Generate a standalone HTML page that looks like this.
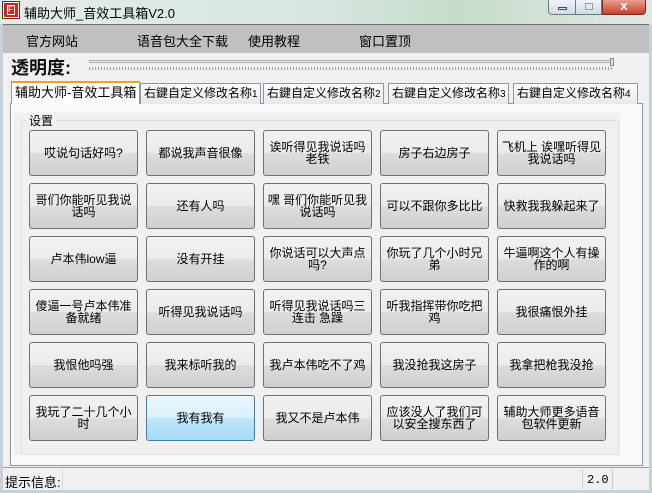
<!DOCTYPE html>
<html><head><meta charset="utf-8"><style>
*{margin:0;padding:0;box-sizing:border-box}
body{width:652px;height:493px;overflow:hidden;background:#f0f0f0;font-family:"Liberation Sans","Noto Sans CJK SC","WenQuanYi Zen Hei",sans-serif;font-size:12px;color:#000;position:relative}
.abs{position:absolute}
#title{left:0;top:0;width:652px;height:24px;background:linear-gradient(90deg,#e4ece8 0%,#d6e6de 50%,#c6dccc 70%,#dfe8e2 100%)}
.btn{position:absolute;width:109px;height:46px;border:1px solid #707070;border-radius:3px;background:linear-gradient(#f2f2f2 0%,#ebebeb 50%,#dddddd 51%,#cfcfcf 100%);display:flex;align-items:center;justify-content:center;text-align:center;line-height:12px;font-size:12px;padding:0 3px}
.btn.sel{border-color:#3c7fb1;background:linear-gradient(#eaf6fd 0%,#d9f0fc 50%,#bee6fd 51%,#a7d9f5 100%)}
.tab{position:absolute;top:83px;height:21px;border:1px solid #8c9aa8;border-bottom:none;background:linear-gradient(#fdfdfd,#e8e8e8);font-size:12px;line-height:19px;padding-left:3px;white-space:nowrap;overflow:hidden}
</style></head><body>
<div id="title" class="abs"></div>
<div class="abs" style="left:3px;top:2px;width:16px;height:16px;background:#c42a20;border:1px solid #fff;outline:1px solid #8a1a14"><div style="position:absolute;left:3px;top:2px;width:8px;height:10px;border:1px solid #fff;color:#fff;font-size:8px;line-height:8px">F</div></div>
<div class="abs" style="left:24px;top:3px;font-size:13px;">辅助大师_音效工具箱V2.0</div>
<div class="abs" style="left:548px;top:0;width:28px;height:15px;border:1px solid #6a7a8a;border-top:none;border-radius:0 0 0 4px;background:linear-gradient(#f0f4f8,#d0dae4)"><div style="position:absolute;left:9px;top:7px;width:9px;height:3px;border:1px solid #445"></div></div>
<div class="abs" style="left:575px;top:0;width:27px;height:15px;border:1px solid #6a7a8a;border-top:none;background:linear-gradient(#f0f4f8,#d0dae4)"><div style="position:absolute;left:9px;top:3px;width:8px;height:7px;border:1px solid #99a"></div></div>
<div class="abs" style="left:602px;top:0;width:44px;height:15px;border:1px solid #7a2a20;border-top:none;border-radius:0 0 4px 0;background:linear-gradient(#e8a090,#c8402a);color:#fff;font-weight:bold;text-align:center;font-size:13px;line-height:12px">x</div>
<div class="abs" style="left:0;top:24px;width:652px;height:469px;border:3px solid #c8d0d8;border-top:none;background:#f0f0f0"></div>
<div class="abs" style="left:3px;top:24px;width:646px;height:1px;background:#707070"></div>
<div class="abs" style="left:3px;top:25px;width:646px;height:28px;background:#c0c0c0"></div>
<div class="abs" style="left:26px;top:31px;font-size:13px">官方网站</div>
<div class="abs" style="left:137px;top:31px;font-size:13px">语音包大全下载</div>
<div class="abs" style="left:248px;top:31px;font-size:13px">使用教程</div>
<div class="abs" style="left:359px;top:31px;font-size:13px">窗口置顶</div>
<div class="abs" style="left:11px;top:54px;font-size:18px;font-weight:bold;color:#111">透明度:</div>
<div class="abs" style="left:89px;top:60px;width:524px;height:3px;border:1px solid #b0b0b0;background:#e8e8e8"></div>
<div class="abs" style="left:89px;top:67px;width:524px;height:3px;background:repeating-linear-gradient(90deg,#a0a0a0 0 1px,transparent 1px 3px)"></div>
<div class="abs" style="left:610px;top:58px;width:4px;height:8px;background:#e0e0e0;border:1px solid #888"></div>
<div class="abs" style="left:10px;top:103px;width:633px;height:363px;border:1px solid #8c9aa8;background:#f9f9fb"></div>
<div class="tab" style="left:11px;top:81px;width:129px;height:23px;background:#fdfdfd;border-color:#8c9aa8;border-top:2px solid #f0a030;font-size:13px">辅助大师-音效工具箱</div>
<div class="tab" style="left:140px;width:121px">右鍵自定义修改名称<span style="font-size:10px">1</span></div>
<div class="tab" style="left:263px;width:121px">右鍵自定义修改名称<span style="font-size:10px">2</span></div>
<div class="tab" style="left:388px;width:121px">右鍵自定义修改名称<span style="font-size:10px">3</span></div>
<div class="tab" style="left:513px;width:125px">右鍵自定义修改名称<span style="font-size:10px">4</span></div>
<div class="abs" style="left:14px;top:113px;width:606px;height:342px;background:#f0f0f0"></div>
<div class="abs" style="left:21px;top:120px;width:598px;height:335px;border:1px solid #d5dfe5;border-radius:3px"></div>
<div class="abs" style="left:26px;top:112px;background:#f0f0f0;padding:0 3px;font-size:12px">设置</div>
<div class="btn" style="left:29px;top:130px">哎说句话好吗?</div>
<div class="btn" style="left:146px;top:130px">都说我声音很像</div>
<div class="btn" style="left:263px;top:130px">诶听得见我说话吗老铁</div>
<div class="btn" style="left:380px;top:130px">房子右边房子</div>
<div class="btn" style="left:497px;top:130px">飞机上 诶嘿听得见我说话吗</div>
<div class="btn" style="left:29px;top:183px">哥们你能听见我说话吗</div>
<div class="btn" style="left:146px;top:183px">还有人吗</div>
<div class="btn" style="left:263px;top:183px">嘿 哥们你能听见我说话吗</div>
<div class="btn" style="left:380px;top:183px">可以不跟你多比比</div>
<div class="btn" style="left:497px;top:183px">快救我我躲起来了</div>
<div class="btn" style="left:29px;top:236px">卢本伟low逼</div>
<div class="btn" style="left:146px;top:236px">没有开挂</div>
<div class="btn" style="left:263px;top:236px">你说话可以大声点吗?</div>
<div class="btn" style="left:380px;top:236px">你玩了几个小时兄弟</div>
<div class="btn" style="left:497px;top:236px">牛逼啊这个人有操作的啊</div>
<div class="btn" style="left:29px;top:289px">傻逼一号卢本伟准备就绪</div>
<div class="btn" style="left:146px;top:289px">听得见我说话吗</div>
<div class="btn" style="left:263px;top:289px">听得见我说话吗三连击 急躁</div>
<div class="btn" style="left:380px;top:289px">听我指挥带你吃把鸡</div>
<div class="btn" style="left:497px;top:289px">我很痛恨外挂</div>
<div class="btn" style="left:29px;top:342px">我恨他吗强</div>
<div class="btn" style="left:146px;top:342px">我来标听我的</div>
<div class="btn" style="left:263px;top:342px">我卢本伟吃不了鸡</div>
<div class="btn" style="left:380px;top:342px">我没抢我这房子</div>
<div class="btn" style="left:497px;top:342px">我拿把枪我没抢</div>
<div class="btn" style="left:29px;top:395px">我玩了二十几个小时</div>
<div class="btn sel" style="left:146px;top:395px">我有我有</div>
<div class="btn" style="left:263px;top:395px">我又不是卢本伟</div>
<div class="btn" style="left:380px;top:395px">应该没人了我们可以安全搜东西了</div>
<div class="btn" style="left:497px;top:395px">辅助大师更多语音包软件更新</div>
<div class="abs" style="left:3px;top:467px;width:646px;height:23px;border-top:1px solid #a0a0a0;background:#f0f0f0"></div>
<div class="abs" style="left:5px;top:472px;font-size:13px">提示信息:</div>
<div class="abs" style="left:62px;top:469px;width:1px;height:20px;background:#ddd"></div>
<div class="abs" style="left:582px;top:469px;width:1px;height:20px;background:#ccc"></div>
<div class="abs" style="left:612px;top:469px;width:1px;height:20px;background:#ccc"></div>
<div class="abs" style="left:587px;top:473px;font-family:'Liberation Mono',monospace;font-size:12px">2.0</div>
</body></html>
